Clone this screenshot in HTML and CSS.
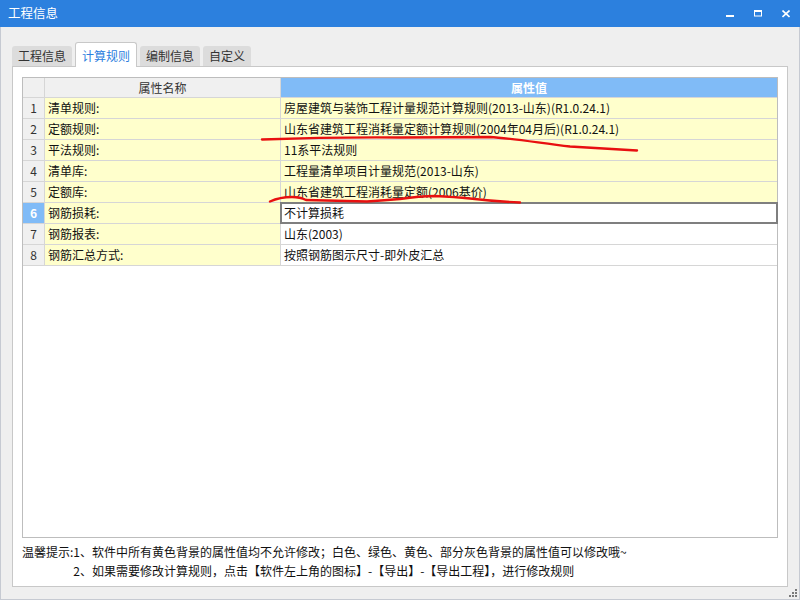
FILE: index.html
```html
<!DOCTYPE html>
<html lang="zh-CN">
<head>
<meta charset="utf-8">
<title>工程信息</title>
<link rel="stylesheet" href="styles.css">
</head>
<body>
<div class="window">
  <div class="titlebar">
    <span class="title">工程信息</span>
    <div class="controls">
      <svg class="ctl" width="8" height="8" viewBox="0 0 8 8"><rect x="0" y="5" width="8" height="2" fill="#fff"/></svg>
      <svg class="ctl" width="8" height="8" viewBox="0 0 8 8"><rect x="0.5" y="0.5" width="7" height="5.5" fill="none" stroke="#fff" stroke-width="1"/><rect x="0" y="0" width="8" height="2" fill="#fff"/></svg>
      <svg class="ctl" width="8" height="8" viewBox="0 0 8 8"><path d="M0.5 0.5 L7.5 7 M7.5 0.5 L0.5 7" stroke="#fff" stroke-width="1.6" fill="none"/></svg>
    </div>
  </div>
  <div class="body">
    <div class="tabs">
      <div class="tab">工程信息</div>
      <div class="tab active">计算规则</div>
      <div class="tab">编制信息</div>
      <div class="tab">自定义</div>
    </div>
    <div class="panel">
      <div class="grid">
        <div class="row head">
          <div class="cell num"></div>
          <div class="cell name">属性名称</div>
          <div class="cell val">属性值</div>
        </div>
        <div class="row">
          <div class="cell num">1</div>
          <div class="cell name">清单规则:</div>
          <div class="cell val ro">房屋建筑与装饰工程计量规范计算规则(2013-山东)(R1.0.24.1)</div>
        </div>
        <div class="row">
          <div class="cell num">2</div>
          <div class="cell name">定额规则:</div>
          <div class="cell val ro">山东省建筑工程消耗量定额计算规则(2004年04月后)(R1.0.24.1)</div>
        </div>
        <div class="row">
          <div class="cell num">3</div>
          <div class="cell name">平法规则:</div>
          <div class="cell val ro">11系平法规则</div>
        </div>
        <div class="row">
          <div class="cell num">4</div>
          <div class="cell name">清单库:</div>
          <div class="cell val ro">工程量清单项目计量规范(2013-山东)</div>
        </div>
        <div class="row">
          <div class="cell num">5</div>
          <div class="cell name">定额库:</div>
          <div class="cell val ro">山东省建筑工程消耗量定额(2006基价)</div>
        </div>
        <div class="row">
          <div class="cell num current">6</div>
          <div class="cell name">钢筋损耗:</div>
          <div class="cell val selected">不计算损耗</div>
        </div>
        <div class="row">
          <div class="cell num">7</div>
          <div class="cell name">钢筋报表:</div>
          <div class="cell val">山东(2003)</div>
        </div>
        <div class="row">
          <div class="cell num">8</div>
          <div class="cell name">钢筋汇总方式:</div>
          <div class="cell val">按照钢筋图示尺寸-即外皮汇总</div>
        </div>
      </div>
      <div class="notes">
        <span class="label">温馨提示:</span>
        <div class="items">
          <p>1、软件中所有黄色背景的属性值均不允许修改；白色、绿色、黄色、部分灰色背景的属性值可以修改哦~</p>
          <p>2、如果需要修改计算规则，点击【软件左上角的图标】-【导出】-【导出工程】，进行修改规则</p>
        </div>
      </div>
    </div>
    <svg class="grip" width="10" height="10" viewBox="0 0 10 10">
      <rect x="7" y="1" width="2" height="2"/>
      <rect x="4" y="4" width="2" height="2"/><rect x="7" y="4" width="2" height="2"/>
      <rect x="1" y="7" width="2" height="2"/><rect x="4" y="7" width="2" height="2"/><rect x="7" y="7" width="2" height="2"/>
    </svg>
  </div>
  <svg class="marks" width="800" height="600" viewBox="0 0 800 600">
    <path d="M262 139.5 Q330 137 400 137.5 L490 137 C510 138 540 143 570 146.5 L637 150.5" />
    <path d="M270 201.5 Q280 197 292 197 Q300 197 306 200 L367 201.5 Q385 200 400 199 Q420 196 435 196 Q455 197 470 198.5 Q495 201.5 520 202.5" />
  </svg>
</div>
</body>
</html>
```

FILE: styles.css
```css
* { box-sizing: border-box; }
html, body { margin: 0; padding: 0; }
body {
  font-family: "Noto Sans CJK SC", "Microsoft YaHei", sans-serif;
  font-size: 12px;
  color: #111;
  background: #efefef;
}
.window {
  width: 800px;
  height: 600px;
  display: flex;
  flex-direction: column;
  position: relative;
  overflow: hidden;
}
.titlebar {
  height: 27px;
  flex: none;
  background: #2c80de;
  display: flex;
  align-items: flex-start;
}
.title {
  padding-left: 8px;
  line-height: 26px;
  color: #fff;
  font-size: 12.5px;
}
.controls {
  margin-left: auto;
  display: flex;
  gap: 20px;
  padding: 10px 10px 0 0;
}
.ctl { display: block; }
.body {
  flex: 1;
  background: #efefef;
  border: 1px solid #c6cad2;
  border-top: none;
  padding: 15px 0 0 11px;
  position: relative;
}
.tabs {
  display: flex;
  gap: 3px;
  height: 24px;
  align-items: flex-end;
}
.tab {
  height: 20px;
  line-height: 20px;
  padding: 0 6px;
  background: #dcdcdc;
  border-radius: 3px 3px 0 0;
  color: #333;
}
.tab.active {
  height: 25px;
  margin-bottom: -1px;
  padding-top: 3px;
  background: #fff;
  border: 1px solid #c8c8c8;
  border-bottom: none;
  color: #2c80de;
  position: relative;
  z-index: 1;
}
.panel {
  width: 776px;
  height: 521px;
  border: 1px solid #c8c8c8;
  background: #fff;
  padding: 10px 9px 0 9px;
}
.grid {
  height: 461px;
  border: 1px solid #bdbdbd;
  background: #fff;
}
.row {
  display: grid;
  grid-template-columns: 22px 236px 1fr;
  height: 21px;
  border-bottom: 1px solid #d6d6d6;
}
.row.head { height: 20px; }
.cell {
  line-height: 20px;
  white-space: nowrap;
  overflow: hidden;
  color: #111;
}
.head .cell { line-height: 19px; }
.num {
  background: #f0f0f0;
  border-right: 1px solid #d6d6d6;
  text-align: center;
  color: #333;
}
.name {
  background: #ffffcc;
  border-right: 1px solid #d6d6d6;
  padding-left: 3px;
}
.val { padding-left: 3px; }
.val.ro { background: #ffffcc; }
.head .name {
  background: #f0f0f0;
  text-align: center;
  color: #333;
  padding-left: 0;
}
.head .val {
  background: #80bbf7;
  color: #fff;
  font-weight: bold;
  text-align: center;
  padding-left: 0;
}
.num.current {
  background: #80bbf7;
  color: #fff;
  font-weight: bold;
}
.val.selected {
  position: relative;
  outline: 2px solid #7f7f7f;
  outline-offset: -1px;
}
.notes {
  display: flex;
  margin-top: 4px;
  line-height: 19px;
  color: #111;
}
.notes p { margin: 0; }
.grip {
  position: absolute;
  right: 1px;
  bottom: 1px;
  fill: #7a7a7a;
}
.marks {
  position: absolute;
  left: 0;
  top: 0;
  pointer-events: none;
  fill: none;
  stroke: #e81010;
  stroke-width: 2.4;
  stroke-linecap: round;
  stroke-linejoin: round;
}
```
